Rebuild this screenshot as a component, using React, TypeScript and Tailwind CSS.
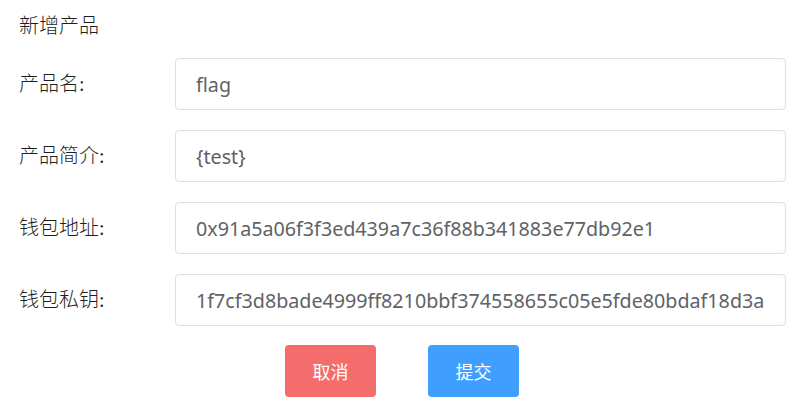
import React from "react";

const labelFont = { fontFamily: '"Liberation Serif", "Noto Sans CJK SC", serif' };

function Row({ label, value }: { label: string; value: string }) {
  return (
    <div className="flex items-center mb-[20px]">
      <div className="w-[156px] text-[20px] text-[#1f1f1f] font-light" style={labelFont}>
        {label}
      </div>
      <input
        readOnly
        defaultValue={value}
        className="w-[611px] h-[52px] rounded-[4px] border border-[#dcdfe6] bg-white px-[20px] text-[19.7px] text-[#606266] outline-none font-['Noto_Sans','Noto_Sans_CJK_SC',sans-serif]"
      />
    </div>
  );
}

export default function App() {
  return (
    <div className="w-[797px] h-[415px] bg-white pl-[19px] pt-[12px] overflow-hidden">
      <div className="text-[20px] text-[#1f1f1f] font-light leading-[28px] mb-[18px]" style={labelFont}>
        新增产品
      </div>
      <Row label="产品名:" value="flag" />
      <Row label="产品简介:" value="{test}" />
      <Row label="钱包地址:" value="0x91a5a06f3f3ed439a7c36f88b341883e77db92e1" />
      <Row label="钱包私钥:" value="1f7cf3d8bade4999ff8210bbf374558655c05e5fde80bdaf18d3ac0a1b2c3d4e" />
      <div className="flex pl-[266px] gap-[52px] -mt-[1px]">
        <button className="w-[91px] h-[52px] rounded-[4px] bg-[#f56c6c] text-white text-[18px] font-['Noto_Sans_CJK_SC',sans-serif]">
          取消
        </button>
        <button className="w-[91px] h-[52px] rounded-[4px] bg-[#409eff] text-white text-[18px] font-['Noto_Sans_CJK_SC',sans-serif]">
          提交
        </button>
      </div>
    </div>
  );
}
